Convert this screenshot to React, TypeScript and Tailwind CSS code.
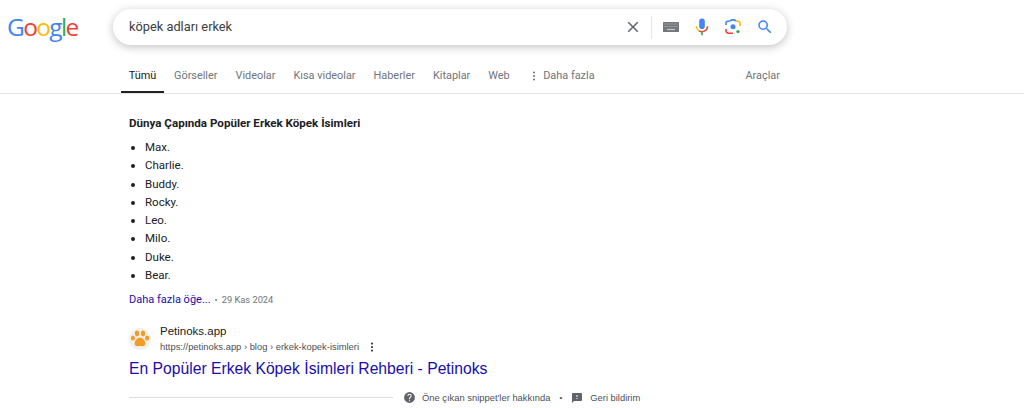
import React from "react";
import { MoreVertical } from "lucide-react";

const tabs = [
  { label: "Görseller", cls: "ml-[10px]" },
  { label: "Videolar", cls: "ml-[18px]" },
  { label: "Kısa videolar", cls: "ml-[18px]" },
  { label: "Haberler", cls: "ml-[18px]" },
  { label: "Kitaplar", cls: "ml-[18px]" },
  { label: "Web", cls: "ml-[18px]" },
];
const names = ["Max.", "Charlie.", "Buddy.", "Rocky.", "Leo.", "Milo.", "Duke.", "Bear."];

function Logo() {
  return (
    <div className="w-[71px] ml-[7px] text-[24.5px] leading-[36px] tracking-[-1.65px] font-['Open_Sans',sans-serif] font-medium select-none flex">
      <span className="text-[#4285f4]">G</span>
      <span className="text-[#ea4335]">o</span>
      <span className="text-[#fbbc05]">o</span>
      <span className="text-[#4285f4]">g</span>
      <span className="text-[#34a853]">l</span>
      <span className="text-[#ea4335]">e</span>
    </div>
  );
}

function Paw() {
  return (
    <div className="w-[22px] h-[22px] rounded-full bg-[#f1f1f0] flex items-center justify-center">
      <svg width="20" height="20" viewBox="0 0 20 20" fill="#f59a23">
        <ellipse cx="2.9" cy="9" rx="2.1" ry="2.6" />
        <ellipse cx="7" cy="4.4" rx="2.1" ry="2.8" />
        <ellipse cx="13" cy="4.4" rx="2.1" ry="2.8" />
        <ellipse cx="17.1" cy="9" rx="2.1" ry="2.6" />
        <path d="M10 8.5c2.6 0 5.4 3.4 5.4 6 0 2.2-1.8 3-3 2.7-1-.2-1.7-.5-2.4-.5s-1.4.3-2.4.5c-1.2.3-3-.5-3-2.7 0-2.6 2.8-6 5.4-6z" />
      </svg>
    </div>
  );
}

export default function App() {
  return (
    <div className="w-[1024px] h-[408px] overflow-hidden bg-white font-['Roboto','Liberation_Sans',sans-serif] text-[#202124]">
      <header className="h-[94px] border-b border-[#e3e3e3] flex flex-col">
        <div className="flex items-center pt-[9px] h-[45px]">
          <Logo />
          <div className="ml-[35px] w-[674px] h-[36px] rounded-full bg-white shadow-[0_2px_8px_rgba(32,33,36,0.28)] flex items-center pl-[16px] pr-[10px]">
            <span className="text-[12.8px] text-[#3c4043] flex-1">köpek adları erkek</span>
            <svg width="18" height="18" viewBox="0 0 24 24" fill="#5f6368" className="mr-[9px]">
              <path d="M19 6.41 17.59 5 12 10.59 6.41 5 5 6.41 10.59 12 5 17.59 6.41 19 12 13.41 17.59 19 19 17.59 13.41 12z" />
            </svg>
            <div className="w-px h-[23px] bg-[#e4e5e6] mr-[11px]" />
            <svg width="16" height="10" viewBox="0 0 16 10" className="mr-[16px]">
              <rect width="16" height="10" rx="0.6" fill="#75787b" />
              <path d="M1.5 2h13M1.5 4.5h13" stroke="#a9abad" strokeWidth="1.2" strokeDasharray="1.2 0.8" />
              <path d="M4 7.5h8" stroke="#c6c7c8" strokeWidth="1.2" />
            </svg>
            <svg width="14" height="18" viewBox="0 0 14 18" className="mr-[16px]">
              <rect x="4.2" y="0.5" width="5.6" height="10.6" rx="2.8" fill="#4285f4" />
              <path d="M1.4 8.2a5.6 5.6 0 0 0 2.7 4.6" fill="none" stroke="#fbbc05" strokeWidth="1.5" />
              <path d="M12.6 8.2a5.6 5.6 0 0 1-8.5 4.6" fill="none" stroke="#ea4335" strokeWidth="1.5" />
              <rect x="6.2" y="13.6" width="1.6" height="3.6" fill="#34a853" />
            </svg>
            <svg width="16" height="16" viewBox="0 0 16 16" className="mr-[15px]" fill="none" strokeWidth="1.6">
              <path d="M1 6V4.2A2.6 2.6 0 0 1 3.6 2H5" stroke="#4285f4" />
              <path d="M1 10v1.8A2.6 2.6 0 0 0 3.6 14.2H8" stroke="#ea4335" />
              <path d="M11 2h1.4A2.6 2.6 0 0 1 15 4.6V7" stroke="#fbbc05" />
              <path d="M5.2 2.2 6.4 .9h3.2l1.2 1.3" stroke="#4285f4" />
              <circle cx="8" cy="7.8" r="2.5" fill="#4285f4" stroke="none" />
              <circle cx="13" cy="12.6" r="1.7" fill="#34a853" stroke="none" />
            </svg>
            <svg width="18" height="18" viewBox="0 0 24 24" fill="#4285f4" className="mr-[3px]">
              <path d="M15.5 14h-.79l-.28-.27A6.47 6.47 0 0 0 16 9.5 6.5 6.5 0 1 0 9.5 16c1.61 0 3.09-.59 4.23-1.57l.27.28v.79l5 4.99L20.49 19l-4.99-5zm-6 0C7.01 14 5 11.99 5 9.5S7.01 5 9.5 5 14 7.01 14 9.5 11.99 14 9.5 14z" />
            </svg>
          </div>
        </div>
        <nav className="flex-1 flex items-stretch text-[10.9px] text-[#70757a] pl-[121px] pr-[244px] mt-[11px]">
          <div className="w-[43px] text-center pt-[12px] border-b-2 border-[#202124] text-[#202124]">Tümü</div>
          {tabs.map((t) => (
            <div key={t.label} className={`pt-[12px] ${t.cls}`}>{t.label}</div>
          ))}
          <div className="ml-[18.5px] pt-[12px] flex items-start">
            <MoreVertical className="w-[12px] h-[12px] mt-[2px] mr-[3px] text-[#70757a]" strokeWidth={2.2} />
            Daha fazla
          </div>
          <div className="ml-auto pt-[12px]">Araçlar</div>
        </nav>
      </header>

      <main className="pl-[129px] pt-[21px]">
        <h2 className="text-[11.6px] leading-[16px] font-bold text-[#202124]">Dünya Çapında Popüler Erkek Köpek İsimleri</h2>
        <ul className="mt-[7px] list-disc pl-[16px] text-[11.5px] leading-[18.3px] text-[#202124]">
          {names.map((n) => <li key={n}>{n}</li>)}
        </ul>
        <div className="mt-[8px] flex items-center h-[16px] text-[11px]">
          <span className="text-[#1a0dab]">Daha fazla öğe...</span>
          <span className="mx-[4px] text-[#70757a] text-[9px]">•</span>
          <span className="text-[#70757a] text-[9.3px]">29 Kas 2024</span>
        </div>
        <div className="mt-[16px] flex items-center h-[30px]">
          <Paw />
          <div className="ml-[9px]">
            <div className="font-['Liberation_Sans',sans-serif] text-[11.5px] leading-[15px] text-[#202124]">Petinoks.app</div>
            <div className="font-['Liberation_Sans',sans-serif] text-[9.4px] leading-[15px] text-[#4d5156] flex items-center">
              https://petinoks.app › blog › erkek-kopek-isimleri
              <MoreVertical className="ml-[7px] w-[12px] h-[12px] text-[#3c4043]" strokeWidth={2.5} />
            </div>
          </div>
        </div>
        <a className="block mt-[3px] font-['Liberation_Sans',sans-serif] text-[15.7px] leading-[24px] text-[#1a0dab]">En Popüler Erkek Köpek İsimleri Rehberi - Petinoks</a>
        <div className="mt-[9.5px] flex items-center text-[9.4px] text-[#4d5156] font-['Liberation_Sans',sans-serif]">
          <div className="w-[264px] h-px bg-[#dadce0]" />
          <svg width="13" height="13" viewBox="0 0 24 24" fill="#5f6368" className="ml-[10px]">
            <path d="M12 2a10 10 0 1 0 0 20 10 10 0 0 0 0-20zm1 17h-2v-2h2v2zm2.07-7.75-.9.92C13.45 12.9 13 13.5 13 15h-2v-.5c0-1.1.45-2.1 1.17-2.83l1.24-1.26A2 2 0 1 0 10 9H8a4 4 0 1 1 8 0c0 .88-.36 1.68-.93 2.25z" />
          </svg>
          <span className="ml-[6px]">Öne çıkan snippet'ler hakkında</span>
          <span className="mx-[9px] text-[8px]">•</span>
          <svg width="12" height="12" viewBox="0 0 24 24" fill="#5f6368">
            <path d="M20 2H4a2 2 0 0 0-2 2v18l4-4h14a2 2 0 0 0 2-2V4a2 2 0 0 0-2-2zm-7 12h-2v-2h2v2zm0-4h-2V6h2v4z" />
          </svg>
          <span className="ml-[7px]">Geri bildirim</span>
        </div>
      </main>
    </div>
  );
}
